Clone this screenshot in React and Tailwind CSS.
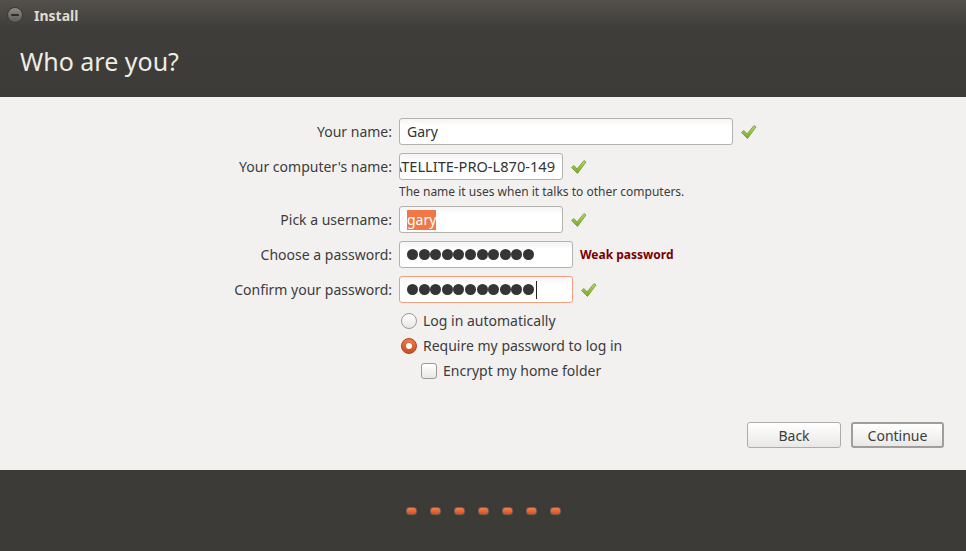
import React from "react";

const Check = () => (
  <svg width="17" height="16" viewBox="0 0 17 16" className="shrink-0">
    <defs>
      <linearGradient id="chk" x1="0" y1="0" x2="0" y2="1">
        <stop offset="0" stopColor="#b9dc6a" />
        <stop offset="1" stopColor="#73a824" />
      </linearGradient>
    </defs>
    <path
      d="M1.5 8.5 L4 6.5 L7 10 L14 1.5 L16 3 L7.5 14.5 Z"
      fill="url(#chk)"
      stroke="#6e9a2a"
      strokeWidth="0.8"
      strokeLinejoin="round"
    />
  </svg>
);

const Field = ({ width, focus, children }) => (
  <div
    className={`h-[27px] ${width} rounded-[3px] border bg-gradient-to-b from-[#f4f4f4] to-white to-[30%] flex items-center px-[7px] overflow-hidden ${
      focus ? "border-[#f0a080]" : "border-[#b4b2af]"
    }`}
  >
    {children}
  </div>
);

const Dots = ({ cursor }) => (
  <div className="flex items-center">
    {Array.from({ length: 11 }).map((_, i) => (
      <span key={i} className="w-[11px] h-[11px] rounded-full bg-[#353535] mr-[0.6px]" />
    ))}
    {cursor && <span className="w-px h-[18px] bg-[#222] ml-[1px]" />}
  </div>
);

const Label = ({ children }) => (
  <div className="h-[27px] flex items-center justify-end text-[14px] text-[#3c3c3c]">{children}</div>
);

const Radio = ({ on }) =>
  on ? (
    <span className="w-4 h-4 rounded-full border border-[#a8441c] bg-gradient-to-b from-[#f07a4a] to-[#c8501e] flex items-center justify-center">
      <span className="w-[6px] h-[6px] rounded-full bg-white" />
    </span>
  ) : (
    <span className="w-4 h-4 rounded-full border border-[#9c9a96] bg-gradient-to-b from-white to-[#e8e7e5]" />
  );

export default function App() {
  return (
    <div
      className="w-[966px] h-[551px] flex flex-col bg-[#f2f1f0] overflow-hidden"
      style={{ fontFamily: '"Noto Sans", "DejaVu Sans", sans-serif' }}
    >
      {/* header */}
      <div className="h-[97px] bg-gradient-to-b from-[#54514c] via-[#3e3d39] via-[30%] to-[#3c3b37] flex flex-col">
        <div className="h-[30px] flex items-center pl-[7px] gap-[11px]">
          <span className="w-4 h-4 rounded-full bg-gradient-to-b from-[#8c8a85] to-[#5e5c58] border border-[#3a3935] flex items-center justify-center">
            <span className="w-[8px] h-[2px] bg-[#2c2b28] rounded-sm" />
          </span>
          <span className="text-[14px] font-bold text-[#dfdbd2]">Install</span>
        </div>
        <div className="pl-[20px] pt-[19px] text-[25px] text-[#efece6] leading-none">Who are you?</div>
      </div>

      {/* content */}
      <div className="flex-1 flex flex-col pt-[21px] pb-[22px] pr-[22px]">
        <div className="grid grid-cols-[392px_auto] gap-x-[7px] gap-y-[8px] items-center">
          <Label>Your name:</Label>
          <div className="flex items-center gap-[7px]">
            <Field width="w-[334px]">
              <span className="text-[14px] text-[#333]">Gary</span>
            </Field>
            <Check />
          </div>

          <Label>Your computer's name:</Label>
          <div className="flex items-center gap-[7px]">
            <Field width="w-[164px] justify-end">
              <span className="text-[14.6px] text-[#333] whitespace-nowrap">SATELLITE-PRO-L870-149</span>
            </Field>
            <Check />
          </div>

          <div />
          <div className="text-[12px] text-[#3c3c3c] -mt-[4px] -mb-[2px] leading-[16px]">
            The name it uses when it talks to other computers.
          </div>

          <Label>Pick a username:</Label>
          <div className="flex items-center gap-[7px]">
            <Field width="w-[164px]">
              <span className="text-[14px] text-white bg-[#f07746] leading-[20px]">gary</span>
            </Field>
            <Check />
          </div>

          <Label>Choose a password:</Label>
          <div className="flex items-center gap-[7px]">
            <Field width="w-[174px]">
              <Dots />
            </Field>
            <span className="text-[12px] font-bold text-[#7a0000]">Weak password</span>
          </div>

          <Label>Confirm your password:</Label>
          <div className="flex items-center gap-[7px]">
            <Field width="w-[174px]" focus>
              <Dots cursor />
            </Field>
            <Check />
          </div>
        </div>

        <div className="pl-[401px] mt-[5px] flex flex-col text-[14px] text-[#3c3c3c]">
          <label className="h-[25px] flex items-center gap-[6px]">
            <Radio />
            <span>Log in automatically</span>
          </label>
          <label className="h-[25px] flex items-center gap-[6px]">
            <Radio on />
            <span>Require my password to log in</span>
          </label>
          <label className="h-[25px] flex items-center gap-[6px] pl-[20px]">
            <span className="w-4 h-4 rounded-[3px] border border-[#9c9a96] bg-gradient-to-b from-white to-[#e8e7e5]" />
            <span>Encrypt my home folder</span>
          </label>
        </div>

        <div className="mt-auto flex justify-end gap-[10px]">
          <button className="w-[94px] h-[26px] rounded-[3px] border border-[#aeaca8] bg-gradient-to-b from-white to-[#e9e8e6] text-[14px] text-[#3c3c3c]">
            Back
          </button>
          <button className="w-[93px] h-[26px] rounded-[3px] border-2 border-[#a09e9a] bg-gradient-to-b from-white to-[#e9e8e6] text-[14px] text-[#3c3c3c]">
            Continue
          </button>
        </div>
      </div>

      {/* footer */}
      <div className="h-[81px] bg-[#3c3b37] flex items-center justify-center gap-[13px] pl-[1px]">
        {Array.from({ length: 7 }).map((_, i) => (
          <span
            key={i}
            className="w-[11px] h-[8px] rounded-[3px] border border-[#7a5a4a] bg-gradient-to-b from-[#f08050] to-[#d9501c]"
          />
        ))}
      </div>
    </div>
  );
}
